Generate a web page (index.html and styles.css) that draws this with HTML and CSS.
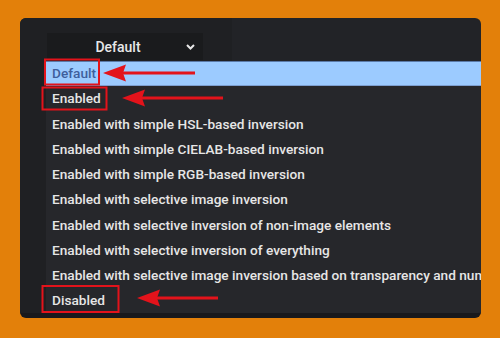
FILE: index.html
```html
<!DOCTYPE html>
<html>
<head>
<meta charset="utf-8">
<link rel="stylesheet" href="styles.css">
</head>
<body>
<div class="panel">
  <div class="side"></div>
  <div class="content">
    <div class="select">
      <span class="select-label">Default</span>
      <svg class="chev" width="9" height="6" viewBox="0 0 9 6"><path d="M1 1 L4.5 4.5 L8 1" fill="none" stroke="#e8e8e8" stroke-width="2"/></svg>
    </div>
    <ul class="list">
      <li class="item selected">Default</li>
      <li class="item">Enabled</li>
      <li class="item">Enabled with simple HSL-based inversion</li>
      <li class="item">Enabled with simple CIELAB-based inversion</li>
      <li class="item">Enabled with simple RGB-based inversion</li>
      <li class="item">Enabled with selective image inversion</li>
      <li class="item">Enabled with selective inversion of non-image elements</li>
      <li class="item">Enabled with selective inversion of everything</li>
      <li class="item">Enabled with selective image inversion based on transparency and number of colors</li>
      <li class="item">Disabled</li>
    </ul>
  </div>
</div>
<svg class="marks" width="500" height="338" viewBox="0 0 500 338">
  <g fill="none" stroke="#e3131b" stroke-width="2">
    <rect x="45" y="59.5" width="54" height="25"/>
    <rect x="42.5" y="87.5" width="64" height="22"/>
    <rect x="42.5" y="286" width="76" height="26"/>
  </g>
  <g fill="#e3131b">
    <rect x="120" y="71.5" width="75" height="3"/>
    <polygon points="103,73 126,64.5 123,73 126,81.5"/>
    <rect x="140" y="96.5" width="83" height="3"/>
    <polygon points="122,98 145,89.5 142,98 145,106.5"/>
    <rect x="155" y="296.5" width="63" height="3"/>
    <polygon points="137,298 160,289.5 157,298 160,306.5"/>
  </g>
</svg>
</body>
</html>
```
FILE: styles.css
```css
html, body {
  margin: 0;
  padding: 0;
}
body {
  width: 500px;
  height: 338px;
  background: #e3800a;
  font-family: Roboto, "Liberation Sans", sans-serif;
  position: relative;
  overflow: hidden;
  padding: 18px 0 0 20px;
  box-sizing: border-box;
}
.panel {
  width: 461px;
  height: 300px;
  background: #222327;
  border-radius: 6px;
  border-bottom: 5px solid #19191c;
  box-sizing: border-box;
  display: flex;
  overflow: hidden;
  position: relative;
}
.side {
  position: absolute;
  left: 0;
  top: 0;
  width: 212px;
  height: 100%;
  background: #1f2023;
}
.content {
  position: relative;
  padding: 15px 0 0 26px;
  flex: 1;
  min-width: 0;
}
.select {
  margin-left: 1px;
  width: 156px;
  height: 27px;
  background: #1a1b1d;
  display: flex;
  align-items: center;
  justify-content: center;
  position: relative;
  color: #e8e8e8;
  font-size: 14px;
  font-weight: 500;
}
.select-label {
  margin-left: -14px;
}
.chev {
  position: absolute;
  right: 8px;
  top: 11px;
}
.list {
  list-style: none;
  margin: 1px 0 0 0;
  padding: 0;
  background: #26272b;
  border-bottom: 1px solid #3a3b3f;
}
.item {
  height: 25.25px;
  line-height: 25.25px;
  padding-left: 6px;
  color: #e6e6e6;
  font-size: 13.65px;
  font-weight: 500;
  white-space: nowrap;
  overflow: hidden;
}
.item.selected {
  background: #9ccbff;
  color: #3f5f9c;
  border-top: 1px solid #5a7aa8;
  border-bottom: 1px solid #7d9fd0;
  height: 23.25px;
  line-height: 23.25px;
}
.marks {
  position: absolute;
  left: 0;
  top: 0;
}
```
